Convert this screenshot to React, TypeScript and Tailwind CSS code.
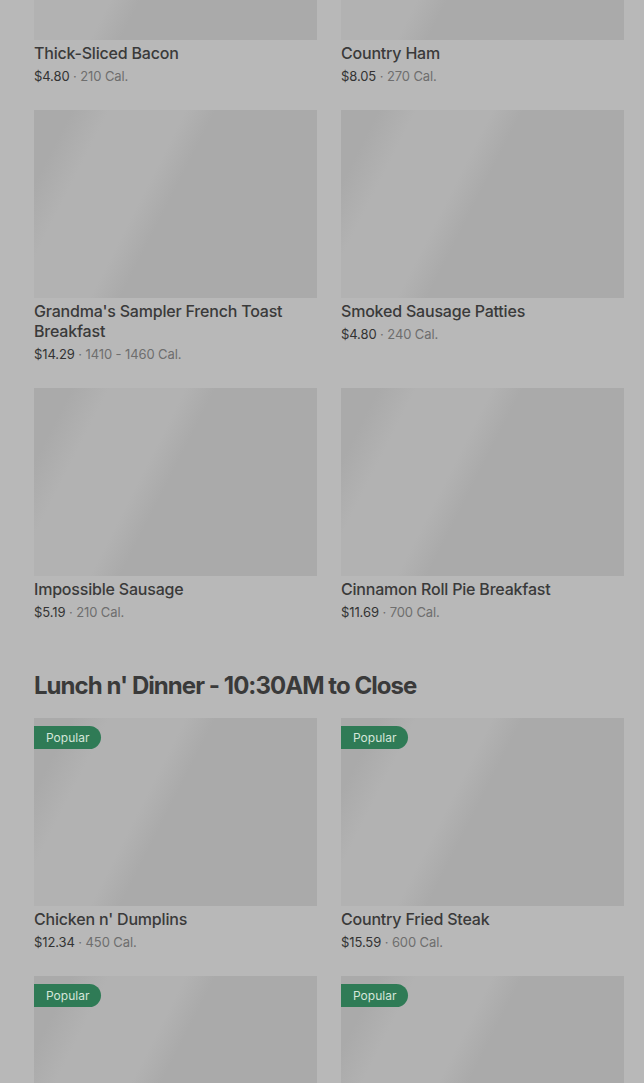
type Item = {
  name: string;
  price: string;
  cal: string;
  popular?: boolean;
};

const breakfast: Item[] = [
  { name: "Thick-Sliced Bacon", price: "$4.80", cal: "210 Cal." },
  { name: "Country Ham", price: "$8.05", cal: "270 Cal." },
  { name: "Grandma's Sampler French Toast Breakfast", price: "$14.29", cal: "1410 - 1460 Cal." },
  { name: "Smoked Sausage Patties", price: "$4.80", cal: "240 Cal." },
  { name: "Impossible Sausage", price: "$5.19", cal: "210 Cal." },
  { name: "Cinnamon Roll Pie Breakfast", price: "$11.69", cal: "700 Cal." },
];

const lunch: Item[] = [
  { name: "Chicken n' Dumplins", price: "$12.34", cal: "450 Cal.", popular: true },
  { name: "Country Fried Steak", price: "$15.59", cal: "600 Cal.", popular: true },
  { name: "Meatloaf", price: "$13.99", cal: "620 Cal.", popular: true },
  { name: "Hamburger Steak", price: "$13.49", cal: "560 Cal.", popular: true },
];

export default function App() {
  return (
    <div
      className="min-h-screen overflow-hidden bg-[#b8b8b8] pl-[34px] pr-[20px]"
      style={{ fontFamily: "Inter, 'Noto Sans', sans-serif" }}
    >
      {/* scrolled down: first row image is mostly above the fold */}
      <div className="-mt-[148px]">
        <MenuGrid items={breakfast} />

        <h2 className="mt-12 mb-4 text-[24px] leading-8 font-bold tracking-[-0.95px] text-[#3a3a3a]">
          Lunch n' Dinner - 10:30AM to Close
        </h2>

        <MenuGrid items={lunch} />
      </div>
    </div>
  );
}

function MenuGrid({ items }: { items: Item[] }) {
  return (
    <div className="grid grid-cols-2 gap-x-6 gap-y-6">
      {items.map((item) => (
        <MenuCard key={item.name} item={item} />
      ))}
    </div>
  );
}

function MenuCard({ item }: { item: Item }) {
  return (
    <div>
      <div className="relative h-[188px] bg-[linear-gradient(117deg,#aaaaaa_10%,#b2b2b2_20%,#b2b2b2_40%,#aaaaaa_48%)]">
        {item.popular && (
          <span className="absolute left-0 top-2 flex h-[23px] items-center rounded-r-full bg-[#2f7b56] pl-3 pr-3 text-[12px] text-[#d5e6da]">
            Popular
          </span>
        )}
      </div>
      <div className="mt-[3px] text-[16px] leading-5 font-medium tracking-[-0.2px] text-[#3a3a3a]">
        {item.name}
      </div>
      <div className="mt-[3px] text-[13px] leading-5 tracking-[-0.1px]">
        <span className="text-[#333333]">{item.price}</span>
        <span className="text-[#6e6e6e]"> · {item.cal}</span>
      </div>
    </div>
  );
}
